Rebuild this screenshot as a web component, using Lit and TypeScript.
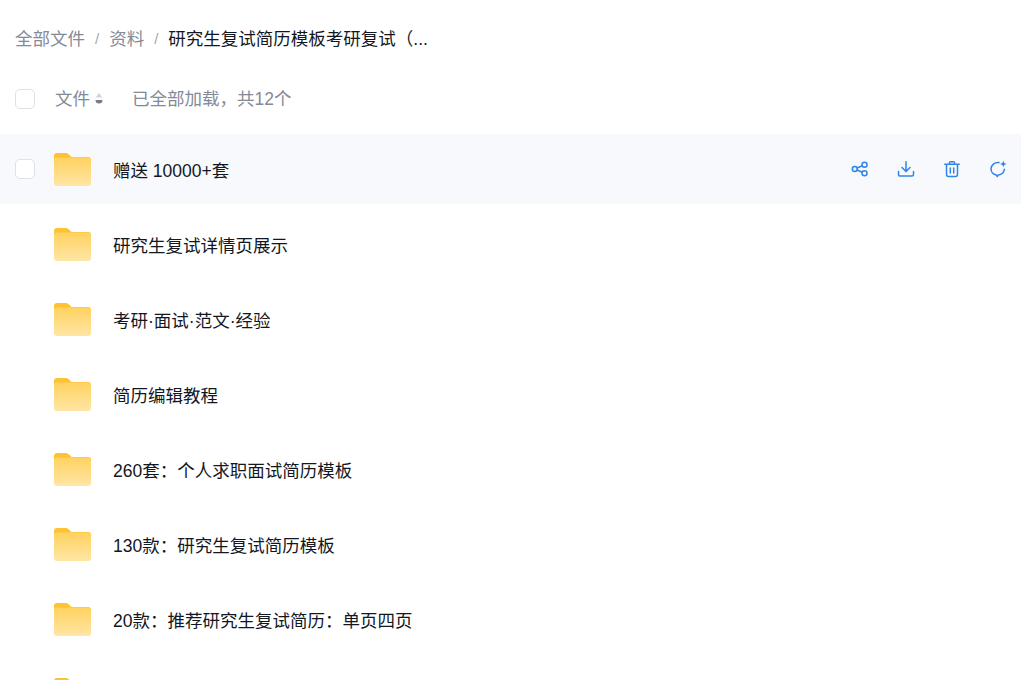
import { LitElement, html, css, svg } from "lit";
import { customElement } from "lit/decorators.js";

const NAMES = [
  "赠送 10000+套",
  "研究生复试详情页展示",
  "考研·面试·范文·经验",
  "简历编辑教程",
  "260套：个人求职面试简历模板",
  "130款：研究生复试简历模板",
  "20款：推荐研究生复试简历：单页四页",
  "",
];

const folder = (id: number) => html`<svg class="folder" viewBox="0 0 37 33" width="37" height="33">
  <defs><linearGradient id="f${id}" x1="0" y1="0" x2="0" y2="1">
    <stop offset="0" stop-color="#ffd260"/><stop offset="1" stop-color="#ffe6a6"/>
  </linearGradient></defs>
  <path d="M3 0h8.5c1.5 0 2.5.6 3.5 1.6L17.5 4H34a3 3 0 0 1 3 3v3H0V3a3 3 0 0 1 3-3z" fill="#ffc233"/>
  <path d="M3 4.5h31a3 3 0 0 1 3 3V30a3 3 0 0 1-3 3H3a3 3 0 0 1-3-3V7.500a3 3 0 0 1 3-3z" fill="url(#f${id})"/>
</svg>`;

const icon = (c: unknown) => html`<svg class="act" viewBox="0 0 18 18" width="18" height="18" fill="none" stroke="#2f86e8" stroke-width="1.5" stroke-linecap="round" stroke-linejoin="round">${c}</svg>`;

const share = svg`<circle cx="3.800" cy="9" r="2.500"/><circle cx="13.500" cy="4.700" r="2.500"/><circle cx="13.500" cy="13.300" r="2.500"/><path d="M6.100 8l5.100-2.300M6.100 10l5.100 2.300"/>`;
const download = svg`<path d="M9 1.800v9.500M5 7.500l4 4 4-4M1.500 11.500v3a1.500 1.500 0 0 0 1.500 1.500h12a1.500 1.500 0 0 0 1.500-1.500v-3"/>`;
const trash = svg`<path d="M1.800 4.300h14.400M6.500 4V2.800c0-.6.400-1 1-1h3c.6 0 1 .4 1 1V4M3.500 4.500v10a2 2 0 0 0 2 2h7a2 2 0 0 0 2-2v-10M7.300 8v5M10.700 8v5"/>`;
const chat = svg`<path d="M10 2.500A7 7 0 0 0 2 8.800c0 3.200 2.300 5.700 5.300 6.100l1 1.600 1.100-1.600a7 7 0 0 0 6-5.600"/><path d="M14.300.800l.9 2.300 2.300.9-2.300.9-.9 2.300-.9-2.300-2.300-.9 2.300-.9z" fill="#2f86e8" stroke="none"/>`;

@customElement("app-root")
export class AppRoot extends LitElement {
  static styles = css`
    :host {
      display: block;
      width: 1021px;
      height: 680px;
      overflow: hidden;
      background: #fff;
      font-family: "Liberation Sans", "Noto Sans CJK SC", sans-serif;
      font-size: 17.5px;
      color: #13171f;
    }
    .crumbs {
      display: flex;
      align-items: center;
      height: 24px;
      padding: 27px 0 0 15px;
      color: #848a96;
      line-height: 24px;
    }
    .sep { margin: 0 10px; font-size: 15px; color: #a3a8b2; }
    .current { color: #13171f; }
    .head {
      display: flex;
      align-items: center;
      height: 24px;
      padding: 36px 0 0 15px;
      color: #848a96;
      line-height: 24px;
    }
    .check {
      width: 18px;
      height: 18px;
      border: 1px solid #dfe1e6;
      border-radius: 5px;
      background: #fff;
      flex: none;
    }
    .head-name { margin-left: 20px; }
    .sort { margin-left: 4px; display: block; }
    .loaded { margin-left: 28px; }
    .list { margin-top: 23px; }
    .row {
      display: flex;
      align-items: center;
      height: 70px;
      margin-bottom: 5px;
      padding-left: 54px;
      position: relative;
    }
    .row.hover { background: #f7f9fc; padding-left: 15px; }
    .row.hover .folder { margin-left: 19px; }
    .folder { flex: none; display: block; }
    .name { margin-left: 22px; white-space: nowrap; }
    .actions {
      margin-left: auto;
      display: flex;
      gap: 28px;
      padding-right: 14px;
    }
    .act { display: block; }
  `;

  render() {
    return html`
      <nav class="crumbs">
        <span>全部文件</span><span class="sep">/</span><span>资料</span><span class="sep">/</span>
        <span class="current">研究生复试简历模板考研复试（...</span>
      </nav>
      <div class="head">
        <span class="check"></span>
        <span class="head-name">文件</span>
        <svg class="sort" viewBox="0 0 10 14" width="10" height="14">
          <path d="M5 1l3.500 4.500h-7z" fill="#d3d5da"/>
          <path d="M1.500 8h7a3.500 3.500 0 1 1-7 0z" fill="#777c87"/>
        </svg>
        <span class="loaded">已全部加载，共12个</span>
      </div>
      <div class="list">
        ${NAMES.map(
          (n, i) => html`<div class="row ${i === 0 ? "hover" : ""}">
            ${i === 0 ? html`<span class="check"></span>` : ""}
            ${folder(i)}
            <span class="name">${n}</span>
            ${i === 0
              ? html`<div class="actions">${icon(share)}${icon(download)}${icon(trash)}${icon(chat)}</div>`
              : ""}
          </div>`
        )}
      </div>
    `;
  }
}
